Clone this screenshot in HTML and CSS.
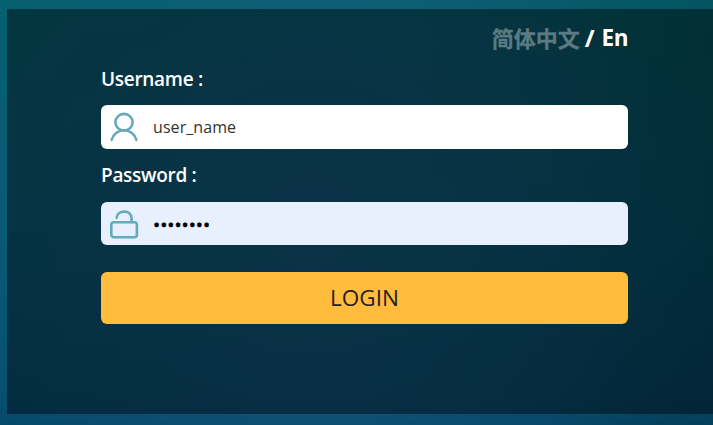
FILE: index.html
```html
<!DOCTYPE html>
<html lang="en">
<head>
<meta charset="utf-8">
<title>Login</title>
<link rel="stylesheet" href="styles.css">
</head>
<body>
<main class="panel">
  <form class="form">
    <nav class="languages"><span class="chinese" lang="zh-CN">简体中文</span><span class="slash">/</span><span class="english">En</span></nav>
    <label class="label" for="username"><span class="username-label">Username :</span></label>
    <div class="field">
      <svg class="icon" viewBox="0 0 30 30"><ellipse cx="15" cy="10.2" rx="8.6" ry="8.3"/><path d="M2.6 28C6 15 24 15 27.4 28"/></svg>
      <input class="input" id="username" type="text" value="user_name">
    </div>
    <label class="label second" for="password"><span class="password-label">Password :</span></label>
    <div class="field filled">
      <svg class="icon" viewBox="0 0 30 30"><rect x="2.3" y="13.2" width="25.6" height="15" rx="2.5"/><path d="M7.6 8.8C8.1 0.6 22.6 0.2 22.6 9.5V13"/></svg>
      <input class="input secret" id="password" type="password" value="12345678">
    </div>
    <button class="login" type="button">LOGIN</button>
  </form>
</main>
</body>
</html>
```
FILE: styles.css
```css
* { box-sizing: border-box; }
body {
  margin: 0;
  height: 425px;
  padding: 9px 0 11px 7px;
  overflow: hidden;
  font-family: "Open Sans", "Noto Sans CJK SC", sans-serif;
  background:
    radial-gradient(ellipse 400px 400px at 310px 220px, rgba(24, 88, 130, .85), rgba(20, 82, 125, 0)),
    linear-gradient(to right, rgba(0, 20, 30, 0) 58%, rgba(0, 20, 30, .16)),
    linear-gradient(#05616d, #055c72 50%, #054e70 94%, #044767);
}
.panel {
  height: 405px;
  padding: 14px 85px 0 94px;
  background: rgba(0, 0, 0, .43);
}
.form { display: flex; flex-direction: column; }
.languages {
  height: 28px;
  display: flex;
  justify-content: flex-end;
  align-items: center;
  color: #fff;
  font-size: 22.5px;
  font-weight: 700;
  line-height: 28px;
}
.chinese {
  color: #5b7b82;
  font-family: "Noto Sans CJK SC", sans-serif;
  font-size: 22px;
  -webkit-text-stroke: .3px #5b7b82;
}
.slash { margin: 0 7px 0 5px; padding-top: 2px; font-size: 24px; }
.english { padding-top: 2px; letter-spacing: -.5px; }
.label {
  height: 26px;
  margin: 15px 0 13px;
  color: #fff;
  font-size: 19px;
  font-weight: 600;
  letter-spacing: -.3px;
  line-height: 26px;
}
.label.second { margin: 13px 0 14px; }
.field {
  height: 44px;
  display: flex;
  align-items: center;
  padding-left: 8px;
  border-radius: 6px;
  background: #fff;
}
.filled { height: 43px; background: #e8f0fe; }
.icon {
  width: 30px;
  height: 30px;
  flex: none;
  fill: none;
  stroke: #65a9bd;
  stroke-width: 2.6;
  stroke-linecap: round;
}
.input {
  flex: 1;
  margin-left: 14px;
  padding: 0;
  border: 0;
  outline: 0;
  background: transparent;
  color: #333;
  font: 16px "Open Sans", sans-serif;
  letter-spacing: .08px;
}
.secret {
  height: 30px;
  margin-left: 13px;
  padding: 2px 0 0 1px;
  color: #000;
  font-size: 19px;
  letter-spacing: 0;
  -webkit-text-stroke: .5px #000;
}
.login {
  height: 52px;
  margin-top: 27px;
  padding: 0 0 2px;
  border: 0;
  border-radius: 6px;
  background: #ffbc3d;
  color: #222;
  font: 22.5px "Open Sans", sans-serif;
}
```
